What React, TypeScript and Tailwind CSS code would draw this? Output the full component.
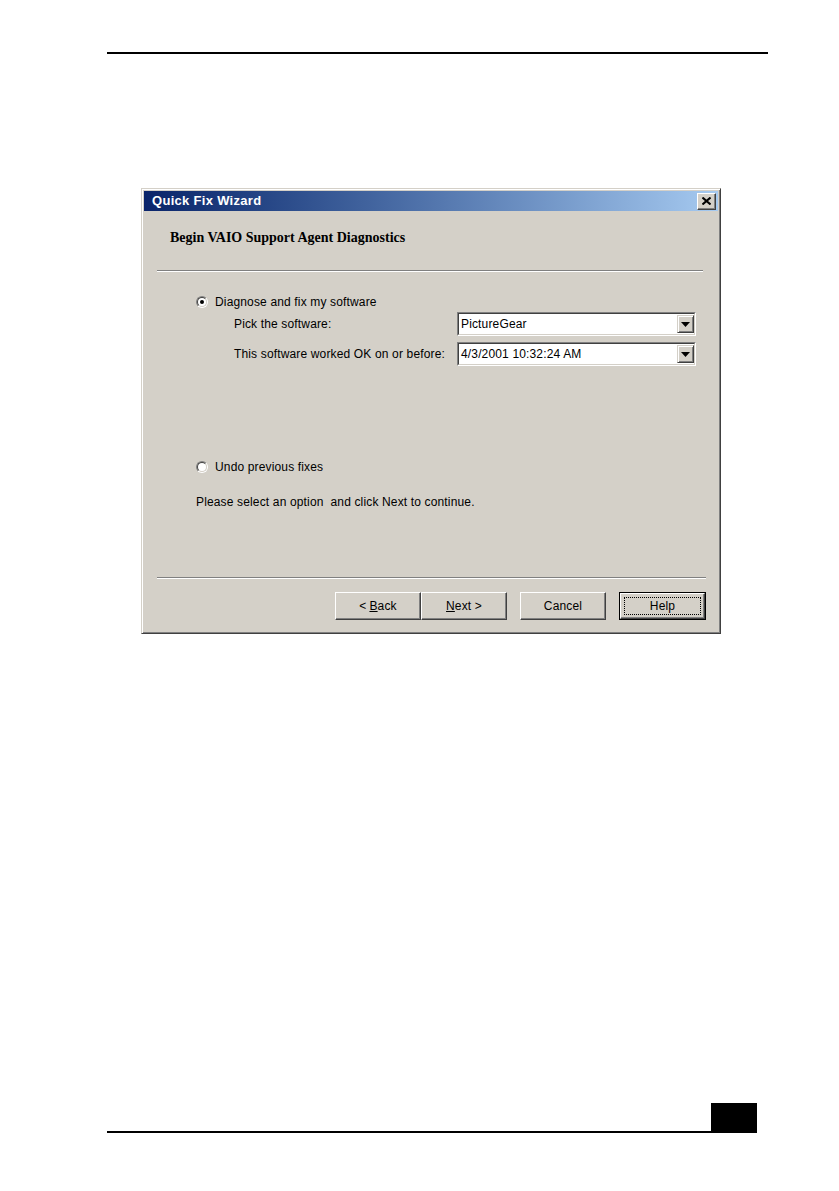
import React from "react";

const sans = { fontFamily: '"Liberation Sans", Arial, sans-serif' };

function Radio({ checked }: { checked?: boolean }) {
  return (
    <div className="relative w-[12px] h-[12px] shrink-0">
      <div className="absolute inset-0 rounded-full border border-t-[#808080] border-l-[#808080] border-b-white border-r-white" />
      <div className="absolute inset-[1px] rounded-full bg-white border border-t-[#404040] border-l-[#404040] border-b-[#d4d0c8] border-r-[#d4d0c8] flex items-center justify-center">
        {checked && <div className="w-[4px] h-[4px] rounded-full bg-black" />}
      </div>
    </div>
  );
}

function Combo({ value }: { value: string }) {
  return (
    <div className="w-[239px] h-[24px] border border-t-[#808080] border-l-[#808080] border-b-white border-r-white">
      <div className="h-full bg-white border border-t-[#404040] border-l-[#404040] border-b-[#d4d0c8] border-r-[#d4d0c8] flex items-center">
        <span className="flex-1 pl-[2px] text-[12px] tracking-[0.15px] text-black leading-none" style={sans}>
          {value}
        </span>
        <div className="w-[17px] h-[18px] bg-[#d4d0c8] border border-t-[#d4d0c8] border-l-[#d4d0c8] border-b-[#404040] border-r-[#404040] shadow-[inset_1px_1px_0_#fff,inset_-1px_-1px_0_#808080] flex items-center justify-center">
          <svg width="9" height="5" viewBox="0 0 9 5">
            <path d="M0 0h9L4.5 5z" fill="#000" />
          </svg>
        </div>
      </div>
    </div>
  );
}

function Btn({ children, w, def }: { children: React.ReactNode; w: string; def?: boolean }) {
  if (def) {
    return (
      <div className={`${w} h-[28px] border border-black`}>
        <div className="h-full bg-[#d4d0c8] border border-t-white border-l-white border-b-[#404040] border-r-[#404040] shadow-[inset_-1px_-1px_0_#808080] p-[3px]">
          <div className="h-full border border-dotted border-black flex items-center justify-center text-[12px] tracking-[0.15px] text-black" style={sans}>
            {children}
          </div>
        </div>
      </div>
    );
  }
  return (
    <div className={`${w} h-[28px] bg-[#d4d0c8] border border-t-white border-l-white border-b-[#404040] border-r-[#404040] shadow-[inset_-1px_-1px_0_#808080] flex items-center justify-center text-[12px] tracking-[0.15px] text-black`} style={sans}>
      {children}
    </div>
  );
}

export default function App() {
  return (
    <div className="w-[839px] h-[1191px] bg-white overflow-hidden flex flex-col">
      <div className="mt-[52px] ml-[107px] w-[661px] h-[2px] bg-black" />

      {/* dialog */}
      <div className="mt-[134px] ml-[141px] w-[580px] h-[446px] bg-[#d4d0c8] border border-t-[#d4d0c8] border-l-[#d4d0c8] border-b-[#404040] border-r-[#404040] shadow-[inset_1px_1px_0_#fff,inset_-1px_-1px_0_#808080] p-[2px] flex flex-col">
        <div className="h-[20px] bg-linear-to-r from-[#0a246a] to-[#a6caf0] flex items-center justify-between pl-[8px] pr-[2px]">
          <span className="text-white font-bold text-[13px] tracking-[0.3px]" style={sans}>
            Quick Fix Wizard
          </span>
          <div className="w-[19px] h-[17px] bg-[#d4d0c8] border border-t-white border-l-white border-b-[#404040] border-r-[#404040] shadow-[inset_-1px_-1px_0_#808080] flex items-center justify-center">
            <svg width="9" height="8" viewBox="0 0 9 8">
              <path d="M0.5 0.5l8 7M8.5 0.5l-8 7" stroke="#000" strokeWidth="2" />
            </svg>
          </div>
        </div>

        <div className="mt-[18px] ml-[26px] h-[16px] flex items-center">
          <span className="text-[14px] font-bold text-black" style={{ fontFamily: '"Liberation Serif", "Times New Roman", serif' }}>
            Begin VAIO Support Agent Diagnostics
          </span>
        </div>

        <div className="mt-[25px] ml-[13px] w-[546px] h-[2px] border-t border-t-[#808080] border-b border-b-white" />

        <div className="mt-[22px] ml-[52px] h-[16px] flex items-center gap-[7px]">
          <Radio checked />
          <span className="text-[12px] tracking-[0.15px] text-black" style={sans}>
            Diagnose and fix my software
          </span>
        </div>

        <div className="mt-[2px] ml-[90px] flex items-center">
          <span className="w-[223px] text-[12px] tracking-[0.15px] text-black" style={sans}>
            Pick the software:
          </span>
          <Combo value="PictureGear" />
        </div>
        <div className="mt-[6px] ml-[90px] flex items-center">
          <span className="w-[223px] text-[12px] tracking-[0.15px] text-black" style={sans}>
            This software worked OK on or before:
          </span>
          <Combo value="4/3/2001 10:32:24 AM" />
        </div>

        <div className="mt-[93px] ml-[52px] h-[16px] flex items-center gap-[7px]">
          <Radio />
          <span className="text-[12px] tracking-[0.15px] text-black" style={sans}>
            Undo previous fixes
          </span>
        </div>

        <div className="mt-[19px] ml-[52px] h-[16px] flex items-center">
          <span className="text-[12px] tracking-[0.15px] text-black whitespace-pre" style={sans}>
            {"Please select an option  and click Next to continue."}
          </span>
        </div>

        <div className="mt-[67px] ml-[13px] w-[549px] h-[2px] border-t border-t-[#808080] border-b border-b-white" />

        <div className="mt-[13px] ml-[191px] flex items-center">
          <Btn w="w-[86px]">
            &lt; <span className="underline ml-[3px]">B</span>ack
          </Btn>
          <Btn w="w-[86px]">
            <span className="underline">N</span>ext &gt;
          </Btn>
          <div className="w-[13px]" />
          <Btn w="w-[86px]">Cancel</Btn>
          <div className="w-[13px]" />
          <Btn w="w-[87px]" def>
            Help
          </Btn>
        </div>
      </div>

      <div className="mt-[469px] ml-[107px] flex items-end">
        <div className="w-[604px] h-[2px] bg-black" />
        <div className="w-[46px] h-[30px] bg-black" />
      </div>
    </div>
  );
}
